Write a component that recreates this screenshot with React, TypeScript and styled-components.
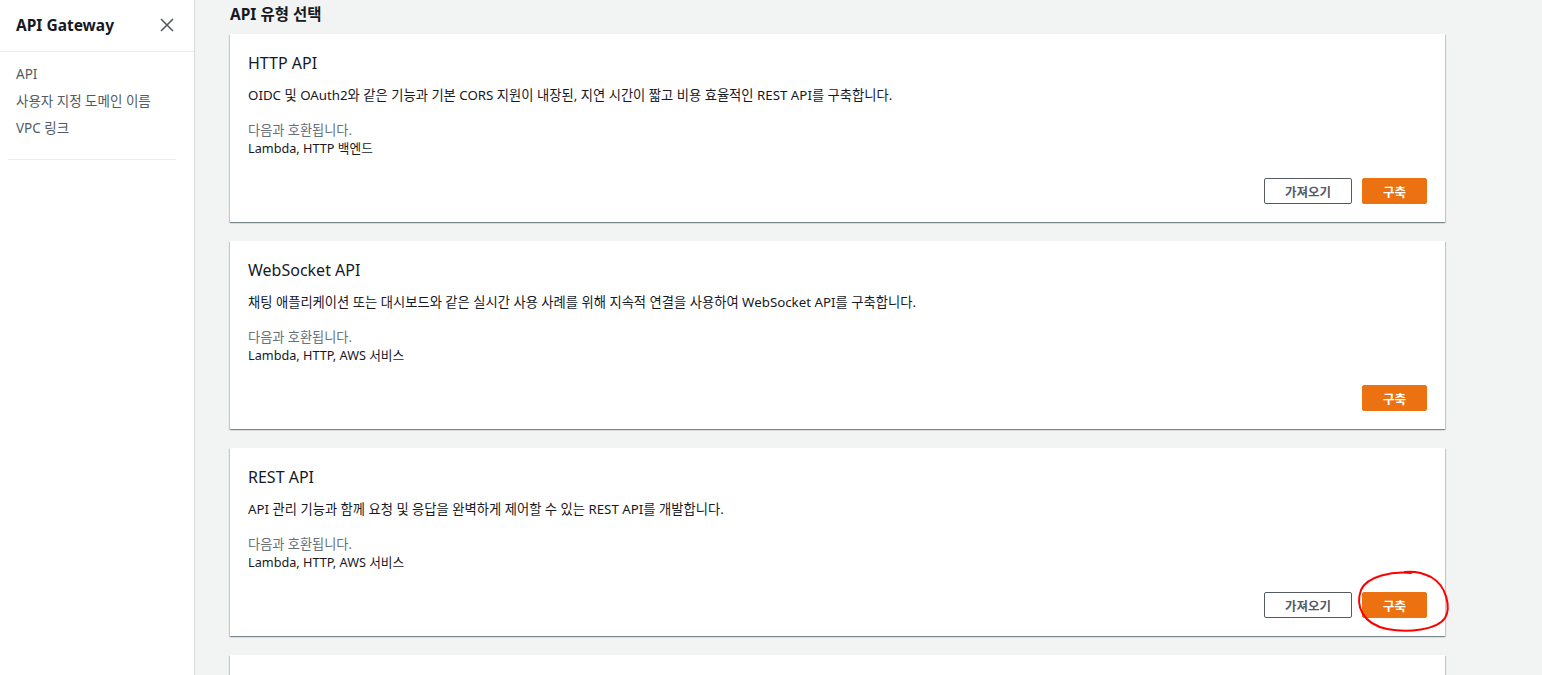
import React from "react";
import styled, { createGlobalStyle } from "styled-components";

const Global = createGlobalStyle`
  html, body { margin: 0; padding: 0; }
  body {
    background: #f2f3f3;
    font-family: "Noto Sans", "Noto Sans CJK KR", sans-serif;
    color: #16191f;
    overflow: hidden;
  }
`;

const Layout = styled.div`
  display: flex;
  height: 675px;
  overflow: hidden;
`;

const Sidebar = styled.nav`
  width: 194px;
  flex: none;
  background: #fff;
  border-right: 1px solid #d5dbdb;
  display: flex;
  flex-direction: column;
`;

const SideHeader = styled.div`
  height: 52px;
  box-sizing: border-box;
  border-bottom: 1px solid #eaeded;
  display: flex;
  align-items: center;
  justify-content: space-between;
  padding: 0 20px 2px 16px;
`;

const SideTitle = styled.div`
  font-size: 15.5px;
  font-weight: 700;
  color: #16191f;
`;

const CloseBtn = styled.button`
  border: none;
  background: none;
  padding: 0;
  display: flex;
  color: #545b64;
  cursor: pointer;
`;

const NavList = styled.ul`
  list-style: none;
  margin: 0 18px 0 8px;
  padding: 13px 0 21px 8px;
  border-bottom: 1px solid #eaeded;
  display: flex;
  flex-direction: column;
  gap: 8px;
`;

const NavItem = styled.li`
  font-size: 13.5px;
  line-height: 19px;
  color: #545b64;
`;

const Main = styled.main`
  flex: 1;
  padding: 3px 97px 0 35px;
  display: flex;
  flex-direction: column;
`;

const PageTitle = styled.h1`
  margin: 0 0 9px;
  font-size: 15.5px;
  line-height: 22px;
  font-weight: 700;
`;

const Cards = styled.div`
  display: flex;
  flex-direction: column;
  gap: 19px;
`;

const Card = styled.section`
  position: relative;
  background: #fff;
  height: 188px;
  box-sizing: border-box;
  padding: 18px 18px 0;
  box-shadow: 0 1px 1px 0 rgba(0, 28, 36, 0.3), 1px 1px 1px 0 rgba(0, 28, 36, 0.15),
    -1px 1px 1px 0 rgba(0, 28, 36, 0.15);
  display: flex;
  flex-direction: column;
`;

const CardTitle = styled.h2`
  margin: 0;
  font-size: 16px;
  line-height: 22px;
  font-weight: 400;
`;

const Desc = styled.p`
  margin: 12px 0 0;
  font-size: 13.3px;
  line-height: 18px;
`;

const Compat = styled.div`
  margin-top: 17px;
  font-size: 12.7px;
  line-height: 18px;
`;

const CompatLabel = styled.div`
  color: #687078;
  font-size: 13.2px;
`;

const Actions = styled.div`
  margin-top: 21px;
  display: flex;
  justify-content: flex-end;
  gap: 10px;
`;

const Button = styled.button<{ $primary?: boolean }>`
  height: 26px;
  box-sizing: border-box;
  padding: 0 20px;
  min-width: ${(p) => (p.$primary ? "64px" : "88px")};
  border-radius: 2px;
  font-family: inherit;
  font-size: 12.5px;
  font-weight: 700;
  border: 1px solid ${(p) => (p.$primary ? "#ec7211" : "#545b64")};
  background: ${(p) => (p.$primary ? "#ec7211" : "#fff")};
  color: ${(p) => (p.$primary ? "#fff" : "#545b64")};
  cursor: pointer;
`;

const Annotation = styled.svg`
  position: absolute;
  right: -8px;
  bottom: 2px;
  pointer-events: none;
`;

type ApiCard = {
  title: string;
  desc: string;
  compat: string;
  importable: boolean;
  circled?: boolean;
};

const cards: ApiCard[] = [
  {
    title: "HTTP API",
    desc: "OIDC 및 OAuth2와 같은 기능과 기본 CORS 지원이 내장된, 지연 시간이 짧고 비용 효율적인 REST API를 구축합니다.",
    compat: "Lambda, HTTP 백엔드",
    importable: true,
  },
  {
    title: "WebSocket API",
    desc: "채팅 애플리케이션 또는 대시보드와 같은 실시간 사용 사례를 위해 지속적 연결을 사용하여 WebSocket API를 구축합니다.",
    compat: "Lambda, HTTP, AWS 서비스",
    importable: false,
  },
  {
    title: "REST API",
    desc: "API 관리 기능과 함께 요청 및 응답을 완벽하게 제어할 수 있는 REST API를 개발합니다.",
    compat: "Lambda, HTTP, AWS 서비스",
    importable: true,
    circled: true,
  },
];

export default function App() {
  return (
    <>
      <Global />
      <Layout>
        <Sidebar>
          <SideHeader>
            <SideTitle>API Gateway</SideTitle>
            <CloseBtn aria-label="닫기">
              <svg width="14" height="14" viewBox="0 0 14 14">
                <path d="M1 1 L13 13 M13 1 L1 13" stroke="currentColor" strokeWidth="1.6" fill="none" />
              </svg>
            </CloseBtn>
          </SideHeader>
          <NavList>
            <NavItem>API</NavItem>
            <NavItem>사용자 지정 도메인 이름</NavItem>
            <NavItem>VPC 링크</NavItem>
          </NavList>
        </Sidebar>
        <Main>
          <PageTitle>API 유형 선택</PageTitle>
          <Cards>
            {cards.map((c) => (
              <Card key={c.title}>
                <CardTitle>{c.title}</CardTitle>
                <Desc>{c.desc}</Desc>
                <Compat>
                  <CompatLabel>다음과 호환됩니다.</CompatLabel>
                  <div>{c.compat}</div>
                </Compat>
                <Actions>
                  {c.importable && <Button>가져오기</Button>}
                  <Button $primary>구축</Button>
                </Actions>
                {c.circled && (
                  <Annotation width="100" height="66" viewBox="0 0 100 66">
                    <path
                      d="M58 5 C40 3 14 8 8 22 C2 38 10 56 34 61 C55 65 84 62 92 50 C98 40 94 18 78 9 C70 5 62 3 52 4"
                      stroke="#f00"
                      strokeWidth="2"
                      fill="none"
                      strokeLinecap="round"
                    />
                  </Annotation>
                )}
              </Card>
            ))}
            <Card />
          </Cards>
        </Main>
      </Layout>
    </>
  );
}
